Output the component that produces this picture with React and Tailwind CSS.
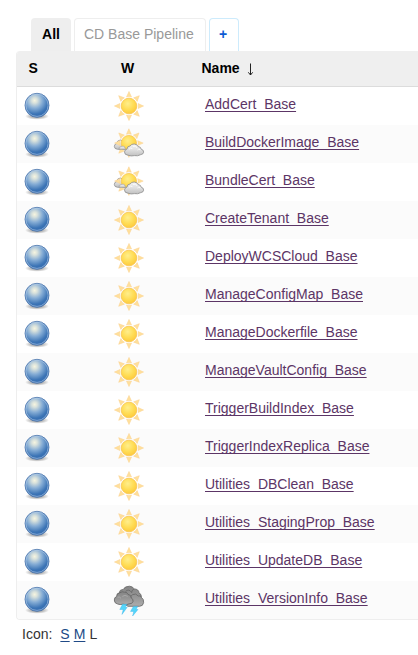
import React from "react";

const jobs = [
  ["AddCert_Base", "sun"],
  ["BuildDockerImage_Base", "cloudy"],
  ["BundleCert_Base", "cloudy"],
  ["CreateTenant_Base", "sun"],
  ["DeployWCSCloud_Base", "sun"],
  ["ManageConfigMap_Base", "sun"],
  ["ManageDockerfile_Base", "sun"],
  ["ManageVaultConfig_Base", "sun"],
  ["TriggerBuildIndex_Base", "sun"],
  ["TriggerIndexReplica_Base", "sun"],
  ["Utilities_DBClean_Base", "sun"],
  ["Utilities_StagingProp_Base", "sun"],
  ["Utilities_UpdateDB_Base", "sun"],
  ["Utilities_VersionInfo_Base", "storm"],
];

// Gradients shared by every status and weather icon
function IconDefs() {
  return (
    <svg width="0" height="0" className="absolute" aria-hidden="true">
      <defs>
        <radialGradient id="ball" cx="0.4" cy="0.3" r="0.72">
          <stop offset="0" stopColor="#f6f5e0" />
          <stop offset="0.16" stopColor="#d8e1dc" />
          <stop offset="0.45" stopColor="#86add5" />
          <stop offset="0.78" stopColor="#3d75b6" />
          <stop offset="1" stopColor="#3068ae" />
        </radialGradient>
        <radialGradient id="shade">
          <stop offset="0" stopColor="#000" stopOpacity="0.5" />
          <stop offset="0.6" stopColor="#000" stopOpacity="0.22" />
          <stop offset="1" stopColor="#000" stopOpacity="0" />
        </radialGradient>
        <radialGradient id="disc" cx="0.42" cy="0.35" r="0.65">
          <stop offset="0" stopColor="#ffee8c" />
          <stop offset="0.6" stopColor="#ffdc54" />
          <stop offset="1" stopColor="#fdca3e" />
        </radialGradient>
        <linearGradient id="cloud" x1="0" y1="0" x2="0" y2="1">
          <stop offset="0" stopColor="#f4f4f4" />
          <stop offset="0.5" stopColor="#dedede" />
          <stop offset="1" stopColor="#c0c0c0" />
        </linearGradient>
        <linearGradient id="dark" x1="0" y1="0" x2="0" y2="1">
          <stop offset="0" stopColor="#858585" />
          <stop offset="0.55" stopColor="#969696" />
          <stop offset="1" stopColor="#adadad" />
        </linearGradient>
      </defs>
    </svg>
  );
}

function Ball() {
  return (
    <svg width="32" height="32" viewBox="0 0 32 32" className="block">
      <ellipse cx="16" cy="26.3" rx="12" ry="3.4" fill="url(#shade)" />
      <circle cx="16" cy="15.3" r="12" fill="url(#ball)" stroke="#4a74ab" strokeWidth="0.8" />
      <circle cx="16" cy="15.3" r="11.1" fill="none" stroke="#b4cde8" strokeOpacity="0.65" strokeWidth="0.9" />
    </svg>
  );
}

function SunShape() {
  return (
    <g>
      {[0, 45, 90, 135, 180, 225, 270, 315].map((a) => (
        <path
          key={a}
          d="M13.5 7 L16 1.4 L18.5 7 Q16 6.2 13.5 7Z"
          transform={`rotate(${a} 16 16)`}
          fill="#ffe09a"
          stroke="#fbd08f"
          strokeWidth="0.5"
        />
      ))}
      <circle cx="16" cy="16" r="7.8" fill="url(#disc)" stroke="#f9c550" strokeWidth="0.8" />
    </g>
  );
}

function Weather({ kind }) {
  return (
    <svg width="32" height="32" viewBox="0 0 32 32" className="block">
      {kind === "sun" && <SunShape />}
      {kind === "cloudy" && (
        <g>
          <path
            d="M4.5 21.3 Q1.2 21 1.3 18.3 Q1.4 16 3.6 15.7 Q4.2 12 7.4 12 Q9.8 12.1 10 15 L14 19 L12 21.3Z"
            fill="url(#cloud)" stroke="#929292" strokeWidth="0.8"
          />
          <g transform="translate(0.2 -0.6) scale(0.98)"><SunShape /></g>
          <path
            d="M6.2 21.4 Q5.2 18.8 8.2 18.5 Q10.3 17.4 12 19.4 L12.5 21.5Z"
            fill="url(#cloud)" stroke="#999" strokeWidth="0.6"
          />
          <path
            d="M15 27.2 Q11.4 26.9 11.5 23.9 Q11.8 21.3 14 21.1 Q14.2 18.1 17 18 Q18.4 15.9 21.2 16 Q24.4 16.2 25.1 18.6 Q27.9 18.7 28.3 21.3 Q30.8 21.8 30.6 24.2 Q30.3 26.4 27.8 26.6 Q24.5 28.4 21.5 27.6 Q18 28.5 15 27.2Z"
            fill="url(#cloud)" stroke="#8c8c8c" strokeWidth="0.8"
          />
          <path d="M16 21.4 Q17 19.2 19.4 20.6 M20 18.4 Q22.6 17.2 24 19.6 M24.5 22 Q25.6 20.4 27.4 21.8" fill="none" stroke="#fff" strokeWidth="0.8" />
        </g>
      )}
      {kind === "storm" && (
        <g>
          <path
            d="M11 20 Q6 18 6.2 9 Q6.5 5.3 10.4 5.4 Q11.5 2.2 16.5 2.2 Q20 2.4 21 4.9 Q25.8 5 26 9 Q28.6 9.8 28.4 13.4 Q31 15 30.6 18.7 Q30 22.2 26.5 22.3 L15 22.3Z"
            fill="url(#dark)" stroke="#656565" strokeWidth="0.8"
          />
          <path d="M12.5 7.4 Q15.8 4.6 18.3 8 M20.9 5.2 Q18.3 6.2 18.6 9 M18 14.6 Q16.9 11.8 19.7 10.6 Q23 8.8 25.2 12 Q28 11 28.3 13.5" fill="none" stroke="#666" strokeWidth="0.8" />
          <path
            d="M4.6 20 Q1.2 19.2 1.3 16 Q1.3 13.1 3.6 12.6 Q3.4 8.9 6.8 8.8 Q9 7 11.6 8.2 Q14.1 7.7 15 10.4 Q18.3 10.7 18.2 14 Q20.6 15 20 17.6 Q19.4 19.9 16 19.9 Q13 21.4 10 20.2 Q7 21 4.6 20Z"
            fill="url(#dark)" stroke="#626262" strokeWidth="0.8"
          />
          <path d="M4.5 13.2 Q7 12.4 8 14.4 M9.3 12.4 Q12 10.4 14.8 12.4" fill="none" stroke="#b8b8b8" strokeWidth="0.6" />
          <path d="M9.5 20.3 H13.8 L12.2 23.3 H14.2 L9 30.4 L10.2 25.5 H6.8Z" fill="#55d6fa" stroke="#35b0ea" strokeWidth="0.4" />
          <path d="M20.4 22.4 H24.8 L23 25.5 H25 L19.6 32 L20.8 27.4 H17.5Z" fill="#55d6fa" stroke="#35b0ea" strokeWidth="0.4" />
        </g>
      )}
    </svg>
  );
}

export default function App() {
  return (
    <div className="h-[655px] w-[418px] overflow-hidden bg-white pt-[18px] pl-4 font-['Liberation_Sans',Arial,sans-serif] text-sm text-[#333]">
      <IconDefs />
      <nav className="flex h-[33px] gap-[3px] pl-[15px]">
        <a className="flex w-10 justify-center rounded-t bg-[#eee] pt-2 leading-4 font-bold text-black">All</a>
        <a className="flex w-[132px] rounded-t border-x border-t border-[#eee] pt-[7px] pl-[9px] leading-4 text-[#999]">CD Base Pipeline</a>
        <a className="flex w-[30px] rounded-t border-x border-t border-[#cdebfc] pt-[7px] pl-[9px] leading-4 font-bold text-[#0b5bd3]">+</a>
      </nav>
      <section className="w-[460px] overflow-hidden rounded-l border-b border-l border-[#eee]">
        <header className="flex h-9 border-b border-[#dcdcdc] bg-[#efefef] pt-[9px] leading-4 font-bold text-black">
          <span className="w-[92px] pl-[11.5px]">S</span>
          <span className="w-[92px] pl-3">W</span>
          <span className="flex pl-[0.5px]">
            Name
            <svg width="9" height="14" viewBox="0 0 9 14" className="mt-[3px] ml-1.5" fill="none" stroke="#222" strokeWidth="1">
              <path d="M4.5 0.5 V12 M2.3 9.3 L4.5 12 L6.7 9.3" />
            </svg>
          </span>
        </header>
        {jobs.map(([name, kind]) => (
          <div key={name} className="flex h-[38px] pt-[3px] even:bg-white odd:bg-[#fbfbfb]">
            <span className="w-[92px] pl-1"><Ball /></span>
            <span className="w-[96px] pl-1"><Weather kind={kind} /></span>
            <a className="pt-[6px] leading-4 text-[#5c3566] underline decoration-1 underline-offset-2 [text-decoration-skip-ink:none]">{name}</a>
          </div>
        ))}
      </section>
      <footer className="flex pt-[6px] pl-1.5 leading-4">
        <span className="mr-2">Icon:</span>
        <a className="mr-1 text-[#204a87] underline decoration-1 underline-offset-2">S</a>
        <a className="mr-1 text-[#204a87] underline decoration-1 underline-offset-2">M</a>
        <span>L</span>
      </footer>
    </div>
  );
}
